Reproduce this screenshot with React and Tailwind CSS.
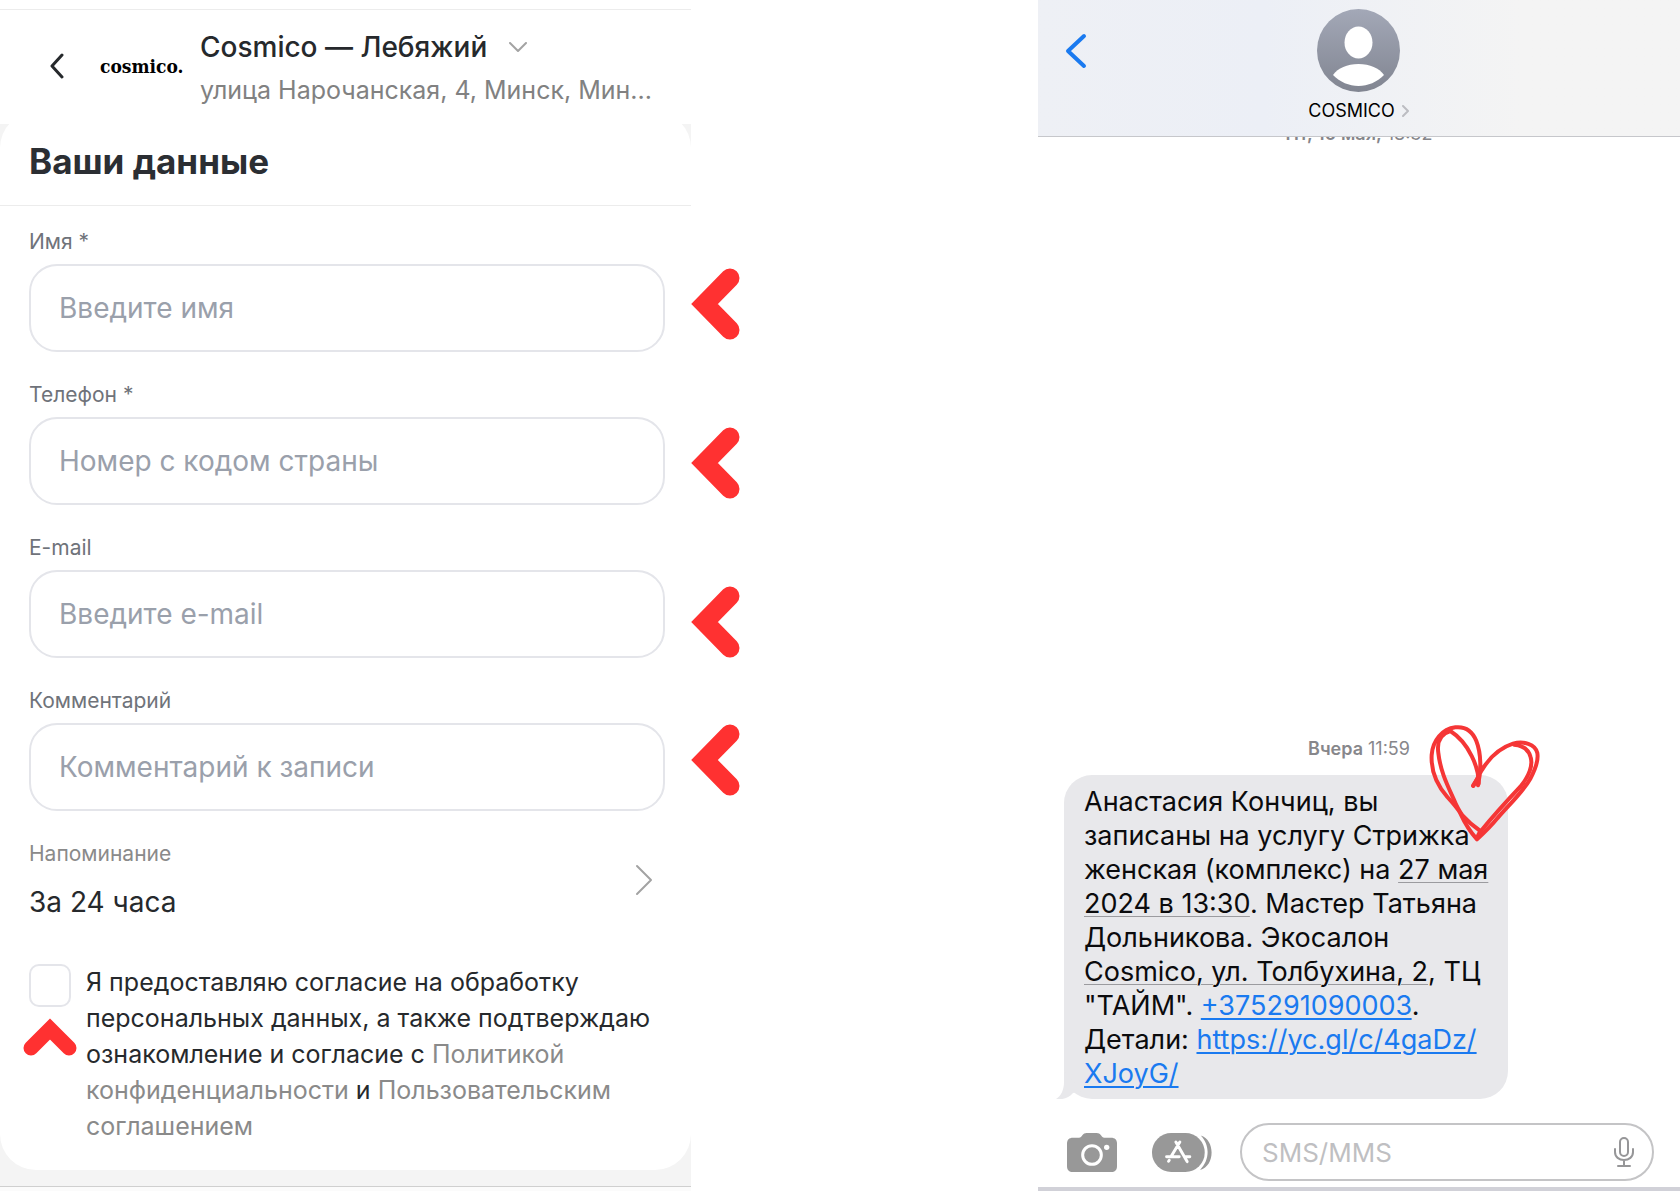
import React from 'react';

const fields = [
  { id: 'name', label: 'Имя *', placeholder: 'Введите имя', type: 'text' },
  { id: 'phone', label: 'Телефон *', placeholder: 'Номер с кодом страны', type: 'tel' },
  { id: 'email', label: 'E-mail', placeholder: 'Введите e-mail', type: 'email' },
  { id: 'comment', label: 'Комментарий', placeholder: 'Комментарий к записи', type: 'text' },
];

const Arrow = () => (
  <svg className="h-[72px] w-[49px]" viewBox="0 0 49 72" fill="none" aria-hidden="true">
    <path d="M39 10 13.5 36 39 62" stroke="#ff3131" strokeWidth="19" strokeLinecap="round" strokeMiterlimit="8" />
  </svg>
);

const Heart = () => (
  <svg
    className="pointer-events-none absolute -right-[52px] -top-16 h-[140px] w-[150px]"
    viewBox="0 0 450 420"
    fill="none"
    stroke="#f53636"
    strokeWidth="12"
    strokeLinecap="round"
    strokeLinejoin="round"
    aria-hidden="true"
  >
    <path d="M204 223C214 180 214 128 199 90C187 60 164 46 136 49C97 54 68 88 65 132C62 188 84 226 112 258C130 278 143 292 151 307C166 340 182 364 201 385C226 362 246 342 262 322C298 280 338 244 361 203C377 173 386 149 382 126C376 99 340 89 309 98C268 111 237 142 215 178C207 192 201 206 190 225" />
    <path d="M206 218C207 172 178 96 121 60C93 68 80 92 85 126C91 180 112 222 130 262C139 284 147 300 158 314C174 332 192 347 211 360L201 380" />
    <path d="M211 362C252 312 296 264 331 227C358 195 369 162 362 139C356 116 337 103 312 101" />
    <path d="M189 224 207 196" />
  </svg>
);

const BookingForm = () => (
  <section className="bg-[#f4f4f4]">
    <div className="h-[9px] bg-white" />
    <header className="relative z-10 flex items-center border-t border-[#ececec] bg-white pb-4 pl-[50px] pr-6 pt-[17px]">
      <button type="button" aria-label="Назад" className="pb-1">
        <svg className="h-[26px] w-[14px]" viewBox="0 0 14 26" fill="none">
          <path d="M12 2 2 13l10 11" stroke="#26292c" strokeWidth="3" strokeLinecap="round" strokeLinejoin="round" />
        </svg>
      </button>
      <span className="ml-9 w-[84px] shrink-0 pb-1 font-['DejaVu_Serif_Condensed','DejaVu_Serif',serif] text-[19px] font-bold leading-6 text-black">
        cosmico.
      </span>
      <div className="ml-4 flex min-w-0 flex-col gap-1">
        <button type="button" className="flex items-center gap-[22px] whitespace-nowrap text-[28px] font-medium leading-[41px] text-[#26292c]">
          Cosmico — Лебяжий
          <svg className="h-[11px] w-[18px]" viewBox="0 0 18 11" fill="none" aria-hidden="true">
            <path d="m1 1 8 8 8-8" stroke="#a3a3a3" strokeWidth="2" strokeLinecap="round" strokeLinejoin="round" />
          </svg>
        </button>
        <p className="whitespace-nowrap text-[25px] leading-9 text-[#818181]">улица Нарочанская, 4, Минск, Мин...</p>
      </div>
    </header>

    <form className="-mt-3 rounded-[36px] bg-white pb-[26px]">
      <h1 className="border-b border-[#ececec] pb-[22px] pl-[29px] pt-[27px] text-[35px] font-bold leading-[44px] text-[#2b2e33]">
        Ваши данные
      </h1>

      <div className="flex flex-col gap-7 pl-[29px] pr-[26px] pt-[21px]">
        {fields.map(({ id, label, placeholder, type }) => (
          <div key={id} className="flex flex-col gap-2">
            <label htmlFor={id} className="text-[21px] leading-[29px] text-[#6f737a]">
              {label}
            </label>
            <input
              id={id}
              type={type}
              placeholder={placeholder}
              className="h-[88px] w-full rounded-[28px] border-2 border-[#e4e5ea] bg-white px-7 text-[28px] text-[#26292c] outline-none placeholder:text-[#9aa0ab]"
            />
          </div>
        ))}

        <button type="button" className="flex items-center justify-between pr-3 text-left">
          <span className="flex flex-col gap-4">
            <span className="text-[21px] leading-[29px] text-[#8a8a8a]">Напоминание</span>
            <span className="text-[28px] leading-9 text-[#26292c]">За 24 часа</span>
          </span>
          <svg className="h-8 w-[18px]" viewBox="0 0 18 32" fill="none" aria-hidden="true">
            <path d="m2 2 14 14L2 30" stroke="#a3a3a3" strokeWidth="2" strokeLinecap="round" strokeLinejoin="round" />
          </svg>
        </button>
      </div>

      <div className="mt-11 flex items-start gap-[15px] pl-[29px] pr-[26px]">
        <div className="relative shrink-0">
          <input
            id="consent"
            type="checkbox"
            className="block h-[43px] w-[42px] appearance-none rounded-[10px] border-2 border-[#e4e5ea] bg-white checked:bg-[#26292c]"
          />
          <svg className="absolute -left-[6px] top-[54px] h-[39px] w-[54px]" viewBox="0 0 54 39" fill="none" aria-hidden="true">
            <path d="M8 30 27 11 46 30" stroke="#ff3131" strokeWidth="15" strokeLinecap="round" strokeMiterlimit="8" />
          </svg>
        </div>
        <p className="text-[25px] leading-9 text-[#26292c]">
          <label htmlFor="consent">
            Я предоставляю согласие на обработку персональных данных, а также подтверждаю ознакомление и согласие с
          </label>{' '}
          <a href="#privacy" className="text-[#8a8a8a]">Политикой конфиденциальности</a> и{' '}
          <a href="#terms" className="text-[#8a8a8a]">Пользовательским соглашением</a>
        </p>
      </div>
    </form>

    <div className="mt-4 h-[6px] border-t border-[#cfcfcf] bg-[#fbfbfb]" />
  </section>
);

const Chat = () => (
  <section className="flex flex-col">
    <header className="relative z-10 flex items-start border-b border-[#c6c7cb] bg-linear-to-r from-[#eef0f5] via-[#eceff6] via-35% to-[#f4f4f4] to-75% pb-[13px] pl-[27px] pr-[50px] pt-[9px]">
      <button type="button" aria-label="Назад" className="mt-6">
        <svg className="h-9 w-[22px]" viewBox="0 0 22 36" fill="none">
          <path d="M19 3 3 18l16 15" stroke="#1a7af0" strokeWidth="4" strokeLinecap="round" strokeLinejoin="round" />
        </svg>
      </button>
      <div className="flex flex-1 flex-col items-center">
        <svg className="h-[83px] w-[83px]" viewBox="0 0 83 83" aria-hidden="true">
          <defs>
            <linearGradient id="avatar" x1="0" y1="0" x2="0" y2="1">
              <stop offset="0" stopColor="#a3a8b7" />
              <stop offset="1" stopColor="#818591" />
            </linearGradient>
          </defs>
          <circle cx="41.500" cy="41.500" r="41.500" fill="url(#avatar)" />
          <ellipse cx="41.500" cy="33.500" rx="14" ry="16" fill="#fff" />
          <path d="M16 66c5-7 14-11 25.500-11S62 59 67 66C60 73 51 77 41.500 77S23 73 16 66Z" fill="#fff" />
        </svg>
        <a href="#contact" className="mt-[7px] flex items-center gap-[7px] text-lg leading-6 text-black">
          COSMICO
          <svg className="h-3 w-[7px]" viewBox="0 0 7 12" fill="none" aria-hidden="true">
            <path d="m1 1 5 5-5 5" stroke="#bcbdc2" strokeWidth="2" strokeLinecap="round" strokeLinejoin="round" />
          </svg>
        </a>
      </div>
    </header>

    <p className="-mt-[13px] text-center text-lg leading-5 text-[#85858a]">
      <span className="font-semibold">Пт, 10 мая,</span> 18:32
    </p>

    <div className="flex flex-1 flex-col justify-end pl-[26px]">
      <p className="mb-[14px] pr-[26px] text-center text-lg leading-6 text-[#87878b]">
        <span className="font-semibold">Вчера</span> 11:59
      </p>
      <div className="relative w-fit rounded-[28px] bg-[#e8e8eb] px-5 pb-2 pt-[10px]">
        <svg className="absolute -left-2 bottom-0 h-7 w-7" viewBox="0 0 28 28" aria-hidden="true">
          <path d="M8 0v11c0 8-3 14-8 17 6 1 13-1 17-6l9-2Z" fill="#e8e8eb" />
        </svg>
        <p className="relative whitespace-nowrap text-[27px] leading-[34px] text-[#0b0b0d]">
          Анастасия Кончиц, вы
          <br />
          записаны на услугу Стрижка
          <br />
          женская (комплекс) на{' '}
          <a href="#date" className="underline decoration-[#9b9b9f] decoration-1 underline-offset-[3px]">
            27 мая
            <br />
            2024 в 13:30
          </a>
          . Мастер Татьяна
          <br />
          Дольникова. Экосалон
          <br />
          <a href="#map" className="underline decoration-[#9b9b9f] decoration-1 underline-offset-[3px]">
            Cosmico, ул. Толбухина, 2
          </a>
          , ТЦ
          <br />
          "ТАЙМ".{' '}
          <a href="tel:+375291090003" className="text-[#1a7af0] underline decoration-2 underline-offset-[3px]">+375291090003</a>.
          <br />
          Детали:{' '}
          <a href="https://yc.gl/c/4gaDz/XJoyG/" className="text-[#1a7af0] underline decoration-2 underline-offset-[3px]">
            https://yc.gl/c/4gaDz/
            <br />
            XJoyG/
          </a>
        </p>
        <Heart />
      </div>
    </div>

    <div className="flex items-center pb-[6px] pl-[29px] pr-[26px] pt-6">
      <button type="button" aria-label="Камера">
        <svg className="h-[39px] w-[50px]" viewBox="0 0 150 117" aria-hidden="true">
          <path d="M18 14h18c5 0 7-3 10-7 4-5 7-7 13-7h30c6 0 9 2 13 7 3 4 5 7 10 7h20c12 0 18 6 18 18v67c0 12-6 18-18 18H18C6 117 0 111 0 99V32C0 20 6 14 18 14Z" fill="#989898" />
          <circle cx="75" cy="66" r="28" fill="none" stroke="#fff" strokeWidth="9" />
          <circle cx="119" cy="43" r="8" fill="#fff" />
        </svg>
      </button>
      <button type="button" aria-label="Приложения" className="ml-[35px]">
        <svg className="h-[39px] w-[60px]" viewBox="0 0 181 117" fill="none" aria-hidden="true">
          <path d="M147 7c44 12 44 92-2 104 30-30 30-76 2-104Z" fill="#989898" />
          <rect width="159" height="117" rx="58" fill="#989898" />
          <g stroke="#fff" strokeWidth="9" strokeLinecap="round">
            <path d="M84 27 58 70M52 82l-2 3M72 27l34 59M44 71h38M98 71h16" />
          </g>
        </svg>
      </button>
      <div className="ml-7 flex h-[58px] min-w-0 flex-1 items-center rounded-full border-2 border-[#c4c4c6] bg-white pl-5 pr-[18px]">
        <input
          type="text"
          aria-label="Сообщение"
          placeholder="SMS/MMS"
          className="min-w-0 flex-1 bg-transparent text-[26px] outline-none placeholder:text-[#bfbfc2]"
        />
        <button type="button" aria-label="Диктовка">
          <svg className="h-[30px] w-5" viewBox="0 0 20 30" fill="none" stroke="#969698" strokeWidth="2" strokeLinecap="round" aria-hidden="true">
            <rect x="6" y="1" width="8" height="18" rx="4" />
            <path d="M1 12v3c0 5 4 8 9 8s9-3 9-8v-3M10 23v6M4 29h12" />
          </svg>
        </button>
      </div>
    </div>
    <div className="h-[5px] bg-[#d1d1d8]" />
  </section>
);

export default function App() {
  return (
    <main className="grid min-h-screen grid-cols-[minmax(0,691fr)_minmax(0,347fr)_minmax(0,642fr)] overflow-hidden bg-white font-['Inter','Liberation_Sans',sans-serif]">
      <BookingForm />
      <div className="flex flex-col items-start gap-[87px] pt-[268px]">
        <Arrow />
        <Arrow />
        <div className="flex flex-col gap-[66px]">
          <Arrow />
          <Arrow />
        </div>
      </div>
      <Chat />
    </main>
  );
}
